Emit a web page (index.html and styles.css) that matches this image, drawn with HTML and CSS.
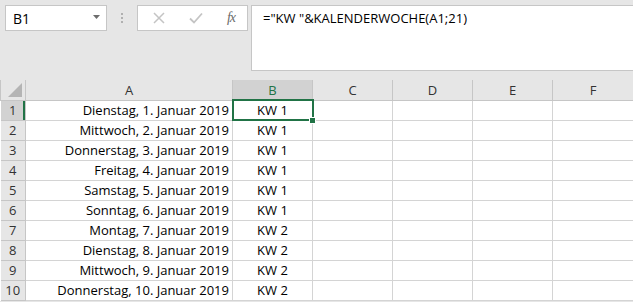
FILE: index.html
```html
<!DOCTYPE html>
<html lang="de">
<head>
    <meta charset="UTF-8">
    <title>KW Tabelle</title>
    <link rel="stylesheet" href="styles.css">
</head>
<body>
    <div class="toolbar">
        <div class="name-box">
            <span>B1</span>
            <svg class="arrow" width="7" height="4" viewBox="0 0 7 4"><path d="M0 0H7L3.5 4Z" fill="#6d6d6d"/></svg>
        </div>
        <div class="grip"><i></i><i></i><i></i></div>
        <div class="func-box">
            <svg width="12" height="12" viewBox="0 0 12 12"><path d="M1 1L11 11M11 1L1 11" stroke="#c4c4c4" stroke-width="1.5" fill="none"/></svg>
            <svg width="14" height="12" viewBox="0 0 14 12"><path d="M1 6.5L5 10.5L13 1.5" stroke="#c4c4c4" stroke-width="1.8" fill="none"/></svg>
            <span class="fx">fx</span>
        </div>
        <div class="formula">="KW "&amp;KALENDERWOCHE(A1;21)</div>
    </div>
    <table class="sheet">
        <colgroup>
            <col class="c-head"><col class="c-a"><col class="c-n"><col class="c-n"><col class="c-n"><col class="c-n"><col class="c-last">
        </colgroup>
        <thead>
            <tr>
                <th class="corner"><svg width="14" height="14" viewBox="0 0 14 14"><path d="M14 0V14H0Z" fill="#b4b4b4"/></svg></th>
                <th>A</th><th class="sel">B</th><th>C</th><th>D</th><th>E</th><th>F</th>
            </tr>
        </thead>
        <tbody id="rows"></tbody>
    </table>
    <script>
        const tage = ['Dienstag', 'Mittwoch', 'Donnerstag', 'Freitag', 'Samstag', 'Sonntag', 'Montag', 'Dienstag', 'Mittwoch', 'Donnerstag'];
        const body = document.getElementById('rows');
        tage.forEach((tag, i) => {
            const n = i + 1;
            const kw = n <= 6 ? 1 : 2;
            const tr = document.createElement('tr');
            tr.innerHTML = `<th class="${n === 1 ? 'sel' : ''}">${n}</th>
                <td class="date">${tag}, ${n}. Januar 2019</td>
                <td class="kw${n === 1 ? ' active' : ''}">KW ${kw}</td>
                <td></td><td></td><td></td><td></td>`;
            body.appendChild(tr);
        });
    </script>
</body>
</html>
```

FILE: styles.css
```css
body {
    margin: 0;
    background: #e6e6e6;
    font-family: "Open Sans", Arial, sans-serif;
    font-size: 13px;
    color: #000;
    overflow: hidden;
}
.toolbar {
    display: flex;
    align-items: flex-start;
    padding: 5px 0 0 5px;
    box-sizing: border-box;
    height: 80px;
}
.name-box {
    width: 102px;
    height: 26px;
    box-sizing: border-box;
    border: 1px solid #c6c6c6;
    background: #fff;
    display: flex;
    align-items: center;
    justify-content: space-between;
    padding: 0 6px 0 7px;
    font-size: 14px;
}
.name-box .arrow {
    margin-top: -2px;
}
.grip {
    width: 30px;
    height: 26px;
    display: flex;
    flex-direction: column;
    align-items: center;
    justify-content: center;
    gap: 2px;
}
.grip i {
    width: 2px;
    height: 2px;
    background: #b0b0b0;
}
.func-box {
    width: 111px;
    height: 26px;
    box-sizing: border-box;
    border: 1px solid #c6c6c6;
    background: #fff;
    display: flex;
    align-items: center;
    justify-content: space-between;
    padding: 0 12px 0 15px;
}
.fx {
    font-family: "Liberation Serif", serif;
    font-style: italic;
    font-size: 14px;
    color: #6b6b6b;
    letter-spacing: -1px;
}
.formula {
    flex: 1;
    margin-left: 3px;
    height: 66px;
    box-sizing: border-box;
    border: 1px solid #c6c6c6;
    border-right: none;
    background: #fff;
    padding: 3px 0 0 11px;
}
.sheet {
    border-collapse: collapse;
    table-layout: fixed;
    width: 633px;
    background: #fff;
}
.c-head { width: 25px; }
.c-a { width: 207px; }
.c-n { width: 80px; }
.c-last { width: 81px; }
.sheet th, .sheet td {
    height: 20px;
    padding: 0;
    border: 1px solid #d4d4d4;
    box-sizing: border-box;
    white-space: nowrap;
    overflow: hidden;
}
.sheet thead th {
    background: #e6e6e6;
    font-weight: normal;
    color: #333;
    border-color: #c6c6c6;
    border-top: none;
}
.sheet tbody th {
    background: #e6e6e6;
    font-weight: normal;
    color: #333;
    text-align: center;
    border-color: #c6c6c6;
    border-left: none;
}
.sheet th.sel {
    background: #d2d2d2;
    color: #217346;
}
.sheet tbody th.sel {
    box-shadow: inset -2px 0 0 #217346;
    color: #333;
}
.corner {
    position: relative;
}
.corner svg {
    position: absolute;
    right: 3px;
    bottom: 3px;
}
.date {
    text-align: right;
    padding-right: 3px !important;
}
.kw {
    text-align: center;
}
.sheet td.active {
    position: relative;
    overflow: visible;
    outline: 2px solid #217346;
    outline-offset: -1px;
}
.active::after {
    content: "";
    position: absolute;
    right: -4px;
    bottom: -4px;
    width: 5px;
    height: 5px;
    background: #217346;
    border: 1px solid #fff;
    z-index: 1;
}
```
